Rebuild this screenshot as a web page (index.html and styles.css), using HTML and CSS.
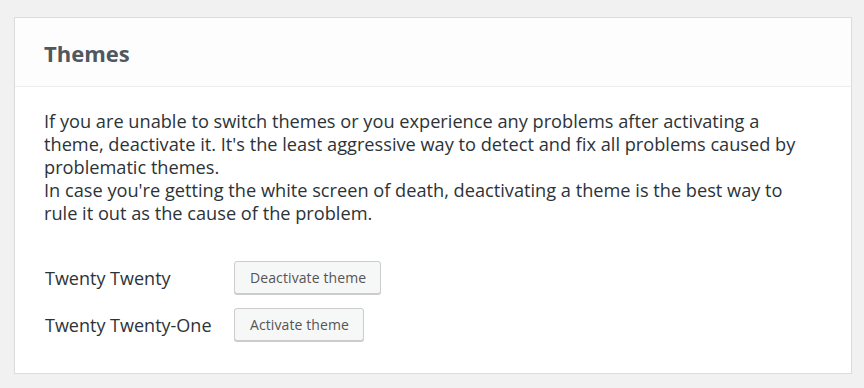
FILE: index.html
```html
<!DOCTYPE html>
<html>
	<head>
		<meta charset="UTF-8">
		<title>Themes</title>
		<link rel="stylesheet" href="styles.css">
	</head>
	<body>
		<!--主题面板-->
		<div class="postbox">
			<h2 class="hndle">Themes</h2>
			<div class="inside">
				<p class="desc">If you are unable to switch themes or you experience any problems after activating a theme, deactivate it. It's the least aggressive way to detect and fix all problems caused by problematic themes.<br>In case you're getting the white screen of death, deactivating a theme is the best way to rule it out as the cause of the problem.</p>
				<ul class="theme-list">
					<li><span class="name">Twenty Twenty</span><button class="button">Deactivate theme</button></li>
					<li><span class="name">Twenty Twenty-One</span><button class="button">Activate theme</button></li>
				</ul>
			</div>
		</div>
	</body>
</html>
```

FILE: styles.css
```css
body,ul,li,p,h2{
	margin: 0;
	padding: 0;
}
li{
	list-style: none;
}
body{
	background: #f1f1f1;
	padding: 17px 12px 0 14px;
	font-family: "Open Sans", "Noto Sans", sans-serif;
	color: #23282d;
}
.postbox{
	background: #fff;
	border: 1px solid #dcdcde;
	box-shadow: 0 1px 1px rgba(0,0,0,.04);
	height: 357px;
	box-sizing: border-box;
}
.hndle{
	height: 68px;
	line-height: 70px;
	padding: 0 29px;
	border-bottom: 1px solid #eee;
	font-size: 22px;
	font-weight: 700;
	color: #50575e;
	background: #fdfdfd;
}
.inside{
	padding: 23px 29px 0 29px;
}
.desc{
	max-width: 762px;
	font-size: 18.2px;
	line-height: 23px;
	color: #2c3338;
}
.theme-list{
	margin-top: 36px;
}
.theme-list li{
	display: flex;
	align-items: center;
	margin-bottom: 14px;
}
.name{
	width: 189px;
	padding-left: 1px;
	font-size: 18px;
	color: #2c3338;
}
.button{
	height: 33px;
	padding: 0 14px 0 15px;
	background: #f6f7f7;
	border: 1px solid #ccc;
	border-radius: 3px;
	box-shadow: 0 1px 0 #ccc;
	font-family: inherit;
	font-size: 14px;
	letter-spacing: 0.1px;
	color: #555;
}
```
